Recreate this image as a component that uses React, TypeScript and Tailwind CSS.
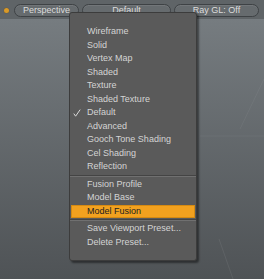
import React from "react";

type Item = { label: string; check?: boolean; hi?: boolean } | "sep";

const items: Item[] = [
  { label: "Wireframe" },
  { label: "Solid" },
  { label: "Vertex Map" },
  { label: "Shaded" },
  { label: "Texture" },
  { label: "Shaded Texture" },
  { label: "Default", check: true },
  { label: "Advanced" },
  { label: "Gooch Tone Shading" },
  { label: "Cel Shading" },
  { label: "Reflection" },
  "sep",
  { label: "Fusion Profile" },
  { label: "Model Base" },
  { label: "Model Fusion", hi: true },
  "sep",
  { label: "Save Viewport Preset..." },
  { label: "Delete Preset..." },
];

function Pill({ label, w }: { label: string; w: string }) {
  return (
    <div
      className={`${w} h-[13px] rounded-full border border-[#3e4245] bg-[#666b6e] flex items-center justify-center text-[9px] leading-none text-[#dcdcdc] shadow-[inset_0_1px_0_rgba(255,255,255,0.08)]`}
    >
      {label}
    </div>
  );
}

export default function App() {
  return (
    <div
      className="relative w-[264px] h-[279px] overflow-hidden flex flex-col bg-[#5d6265]"
      style={{ fontFamily: '"Liberation Sans", Arial, sans-serif' }}
    >
      <div className="h-[19px] flex items-center gap-[3px] pl-[2px] pt-[1px] bg-[#5f6467]">
        <div className="w-[9px] flex items-center justify-center">
          <div className="w-[5px] h-[5px] rounded-full bg-[#d99a2a] shadow-[0_0_1px_#6b4a10]" />
        </div>
        <Pill label="Perspective" w="w-[65px]" />
        <Pill label="Default" w="w-[89px]" />
        <Pill label="Ray GL: Off" w="w-[85px]" />
      </div>
      <div className="relative flex-1 bg-gradient-to-b from-[#767c80] to-[#4f5356]">
        <svg className="absolute inset-0" width="264" height="260">
          <line x1="240" y1="110" x2="264" y2="60" stroke="rgba(255,255,255,0.05)" />
          <line x1="219" y1="220" x2="240" y2="280" stroke="rgba(255,255,255,0.07)" />
          <line x1="200" y1="117" x2="264" y2="117" stroke="rgba(255,255,255,0.05)" />
        </svg>
      </div>

      <div className="absolute left-[69px] top-[12px] w-[128px] h-[249px] rounded-[3px] border border-[#3c3c3c] bg-[#5a5a5a] shadow-[2px_2px_2px_rgba(0,0,0,0.45)] pt-[12px] pb-[11px] flex flex-col">
        {items.map((it, i) =>
          it === "sep" ? (
            <div key={i} className="h-[4px] flex flex-col justify-center">
              <div className="h-[1px] bg-[#444444]" />
              <div className="h-[1px] bg-[#707070]" />
            </div>
          ) : (
            <div
              key={i}
              className={`relative h-[13.5px] flex items-center text-[9px] leading-none ${
                it.hi
                  ? "mx-[1px] bg-[#f2a11f] text-[#222222] shadow-[inset_0_0_0_1px_#d58a12]"
                  : "text-[#d4d4d4]"
              } ${it.hi ? "pl-[16px]" : "pl-[17px]"}`}
            >
              {it.check && (
                <svg
                  className="absolute left-[3px] top-[3px]"
                  width="8"
                  height="8"
                  viewBox="0 0 8 8"
                >
                  <path
                    d="M0.8 4.6 L2.6 7.2 L7.2 0.6"
                    fill="none"
                    stroke="#d8d8d8"
                    strokeWidth="1"
                  />
                </svg>
              )}
              {it.label}
            </div>
          )
        )}
      </div>
    </div>
  );
}
